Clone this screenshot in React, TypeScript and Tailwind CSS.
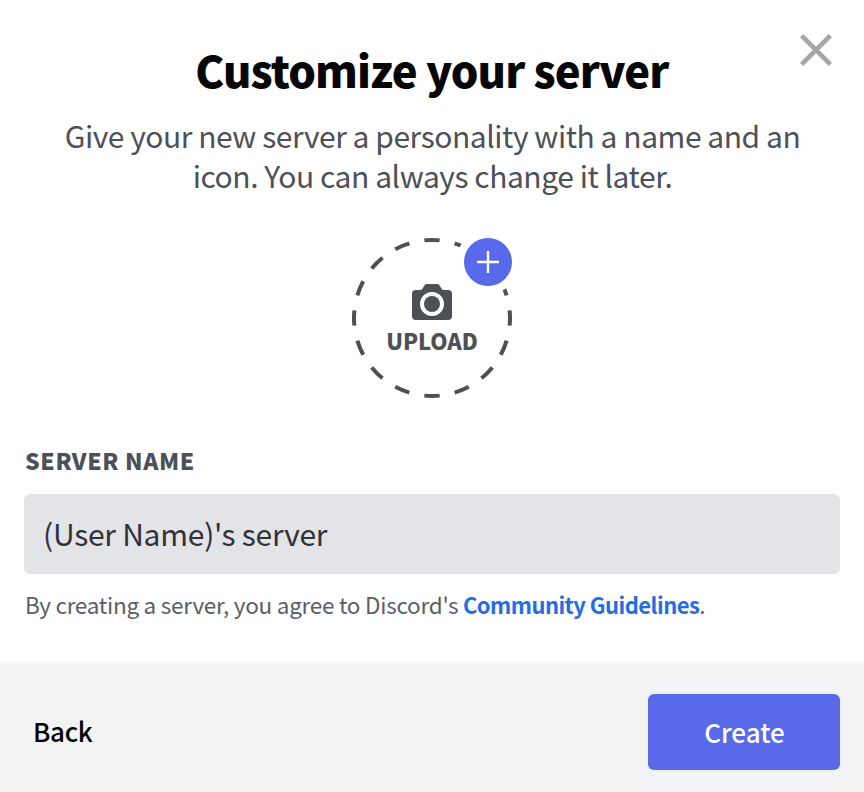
const DASHES = Array.from({ length: 16 }, (_, i) => i * 22.5);

function CloseIcon() {
  return (
    <svg width="32" height="32" viewBox="0 0 32 32" fill="none">
      <path d="M1.6 1.6 30.4 30.4M30.4 1.6 1.6 30.4" stroke="#a5a6a9" strokeWidth="4.6" />
    </svg>
  );
}

function CameraIcon() {
  return (
    <svg width="40" height="36" viewBox="0 0 40 36" fill="#4e5058">
      <path
        fillRule="evenodd"
        d="M14.6 0H25.4Q26.6 0 27.3 1L29.4 4.6Q30.2 6 31.6 6H36Q40 6 40 10V32Q40 36 36 36H4Q0 36 0 32V10Q0 6 4 6H8.400Q9.800 6 10.600 4.600L12.700 1Q13.400 0 14.600 0ZM20 8A12 12 0 1 0 20 32A12 12 0 1 0 20 8Z"
      />
      <circle cx="20" cy="20" r="8" />
    </svg>
  );
}

function UploadIcon() {
  return (
    <button className="relative flex h-40 w-40 flex-col items-center pt-[46px]">
      <svg className="absolute inset-0" width="160" height="160" viewBox="0 0 160 160" fill="none">
        {DASHES.map((angle) => (
          <path
            key={angle}
            d="M72.35 2.38A78 78 0 0 1 87.65 2.38"
            stroke="#4e5058"
            strokeWidth="4"
            transform={`rotate(${angle} 80 80)`}
          />
        ))}
        <circle cx="136" cy="24" r="32" fill="#fff" />
        <circle cx="136" cy="24" r="24" fill="#586aea" />
        <path d="M136 13V35M125 24H147" stroke="#fff" strokeWidth="2.4" />
      </svg>
      <CameraIcon />
      <span className="mt-[6px] text-[22px] leading-7 font-black">UPLOAD</span>
    </button>
  );
}

export default function App() {
  return (
    <div className="flex h-[792px] w-[864px] flex-col bg-white font-['Noto_Sans_CJK_SC','Noto_Sans',sans-serif] text-[#4e5058]">
      <main className="relative flex h-[662px] flex-col px-6 pt-[42px]">
        <button className="absolute top-[34px] right-8" aria-label="Close">
          <CloseIcon />
        </button>
        <h1 className="text-center text-[43.5px] leading-[56px] font-black tracking-[-0.9px] whitespace-nowrap text-[#060607]">
          Customize your server
        </h1>
        <p className="mt-[17px] pl-px text-center text-[30px] leading-10 tracking-[-0.46px] whitespace-nowrap">
          Give your new server a personality with a name and an
          <br />
          icon. You can always change it later.
        </p>
        <div className="mt-[43px] flex justify-center">
          <UploadIcon />
        </div>
        <label className="mt-[46px] pl-px text-[23px] leading-8 font-black tracking-[0.6px]">SERVER NAME</label>
        <div className="mt-[18px] flex h-20 items-center rounded-md bg-[#e3e4e8] px-[19px] pb-[2px] text-[30px] tracking-[-0.25px] text-[#313338]">
          (User Name)'s server
        </div>
        <p className="mt-[14px] pl-px text-[22.5px] leading-8 tracking-[-0.26px] whitespace-nowrap text-[#5c5e66]">
          By creating a server, you agree to Discord's{" "}
          <a className="text-[22px] font-bold tracking-[-0.54px] text-[#266de1]">Community Guidelines</a>.
        </p>
      </main>
      <footer className="flex h-[130px] items-start justify-between border-t-2 border-[#f5f6f7] bg-[#f2f3f5] px-6 pt-[30px]">
        <button className="flex h-[74px] items-center pb-[1px] pl-[9px] text-[26px] font-medium tracking-[-0.3px] text-black">
          Back
        </button>
        <button className="flex h-[76px] w-48 items-center justify-center rounded-md bg-[#586aea] pb-[2px] pl-px text-[26px] font-medium text-white">
          Create
        </button>
      </footer>
    </div>
  );
}
